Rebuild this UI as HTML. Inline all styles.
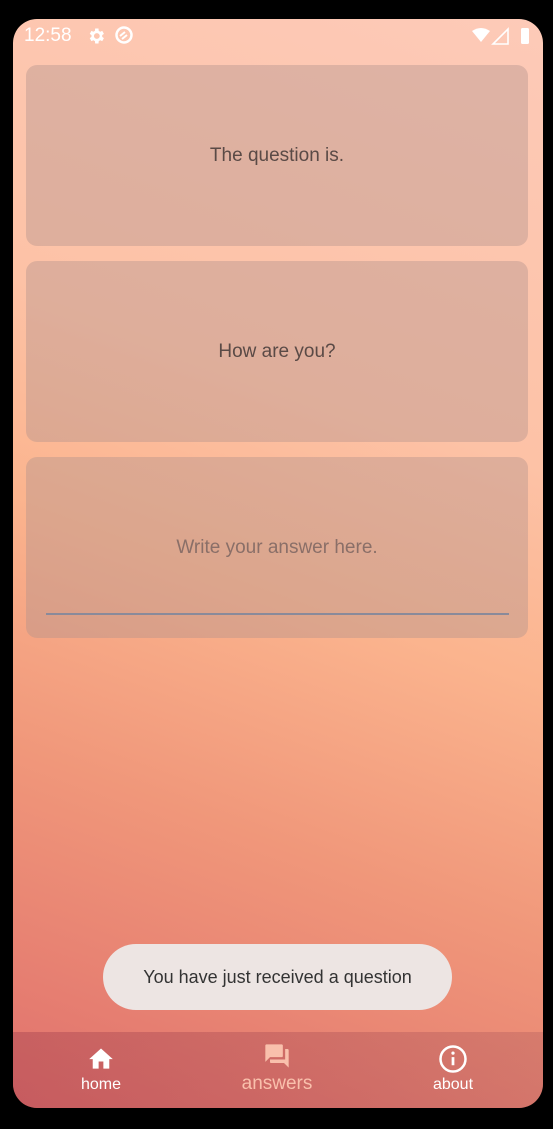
<!DOCTYPE html>
<html><head><style>
html,body{margin:0;padding:0;width:553px;height:1129px;background:#000;overflow:hidden;font-family:"Liberation Sans",sans-serif}
.scr{position:absolute;left:13px;top:19px;width:530px;height:1089px;border-radius:24px;overflow:hidden;
background:linear-gradient(200deg,#fdcab8 0%,#fdc2a6 35%,#fbb48e 52%,#f0977a 72%,#e0706c 100%)}
.st{position:absolute;top:6px;left:11px;color:#fff;font-size:19px}
.card{position:absolute;left:13px;width:502px;height:181px;border-radius:11px;background:rgba(175,145,140,0.4);display:flex;align-items:center;justify-content:center;font-size:19px;color:#5a4a46}
.toast{position:absolute;left:90px;top:925px;width:349px;height:66px;border-radius:33px;background:#ede5e3;display:flex;align-items:center;justify-content:center;font-size:18px;color:#333}
.nav{position:absolute;left:0;top:1013px;width:530px;height:76px;background:linear-gradient(90deg,rgba(160,60,75,0.4),rgba(150,70,80,0.25))}
.it{position:absolute;top:0;width:120px;text-align:center;color:#fff;font-size:16px}
</style></head><body>
<div class="scr">
<div class="st">12:58</div>
<svg style="position:absolute;left:73px;top:7px" width="20" height="20" viewBox="0 0 24 24"><path fill="#fff" d="M19.4 13a7.5 7.5 0 000-2l2.1-1.6-2-3.5-2.5 1a7 7 0 00-1.7-1L15 3h-4l-.3 2.9a7 7 0 00-1.7 1l-2.5-1-2 3.5L6.6 11a7.5 7.5 0 000 2l-2.1 1.6 2 3.5 2.5-1a7 7 0 001.7 1L11 21h4l.3-2.9a7 7 0 001.7-1l2.5 1 2-3.5zM13 15.5a3.5 3.5 0 110-7 3.5 3.5 0 010 7z"/></svg>
<svg style="position:absolute;left:101px;top:6px" width="20" height="20" viewBox="0 0 20 20"><circle cx="10" cy="10" r="7.5" fill="none" stroke="#fff" stroke-width="2.5"/><path d="M6 11l5-4M8 14l5-4" stroke="#fff" stroke-width="2"/></svg>
<svg style="position:absolute;left:458px;top:8px" width="60" height="18" viewBox="0 0 60 18"><path d="M1 4Q10-2 19 4L10 15z" fill="#fff"/><path d="M37 2V17H22z" fill="none" stroke="#fff" stroke-width="1.6"/><rect x="50" y="1" width="8" height="16" rx="1.5" fill="#fff"/></svg>
<div class="card" style="top:46px">The question is.</div>
<div class="card" style="top:242px">How are you?</div>
<div class="card" style="top:438px;color:#8a6f68">Write your answer here.
<div style="position:absolute;left:20px;right:19px;top:156px;height:2px;background:#8a8a9a"></div></div>
<div class="toast">You have just received a question</div>
<div class="nav">
<div class="it" style="left:28px"><svg style="margin-top:13px" width="30" height="26" viewBox="0 0 24 22"><path d="M10 20v-6h4v6h5v-8h3L12 3 2 12h3v8z" fill="#fff"/></svg><div style="margin-top:0px">home</div></div>
<div class="it" style="left:204px;color:#f9c0ac;font-size:19px"><svg style="margin-top:10px" width="30" height="28" viewBox="0 0 24 24"><path d="M21 6h-2v9H6v2c0 .6.4 1 1 1h11l4 4V7c0-.6-.4-1-1-1zm-4 6V3c0-.6-.4-1-1-1H3c-.6 0-1 .4-1 1v14l4-4h10c.6 0 1-.4 1-1z" fill="#f9c0ac"/></svg><div style="margin-top:-3px">answers</div></div>
<div class="it" style="left:380px"><svg style="margin-top:12px" width="30" height="30" viewBox="0 0 24 24"><circle cx="12" cy="12" r="10" fill="none" stroke="#fff" stroke-width="2"/><path d="M12 10.5v6.5" stroke="#fff" stroke-width="2.2"/><circle cx="12" cy="7.3" r="1.3" fill="#fff"/></svg><div style="margin-top:-3px">about</div></div>
</div>
</div>
</body></html>
